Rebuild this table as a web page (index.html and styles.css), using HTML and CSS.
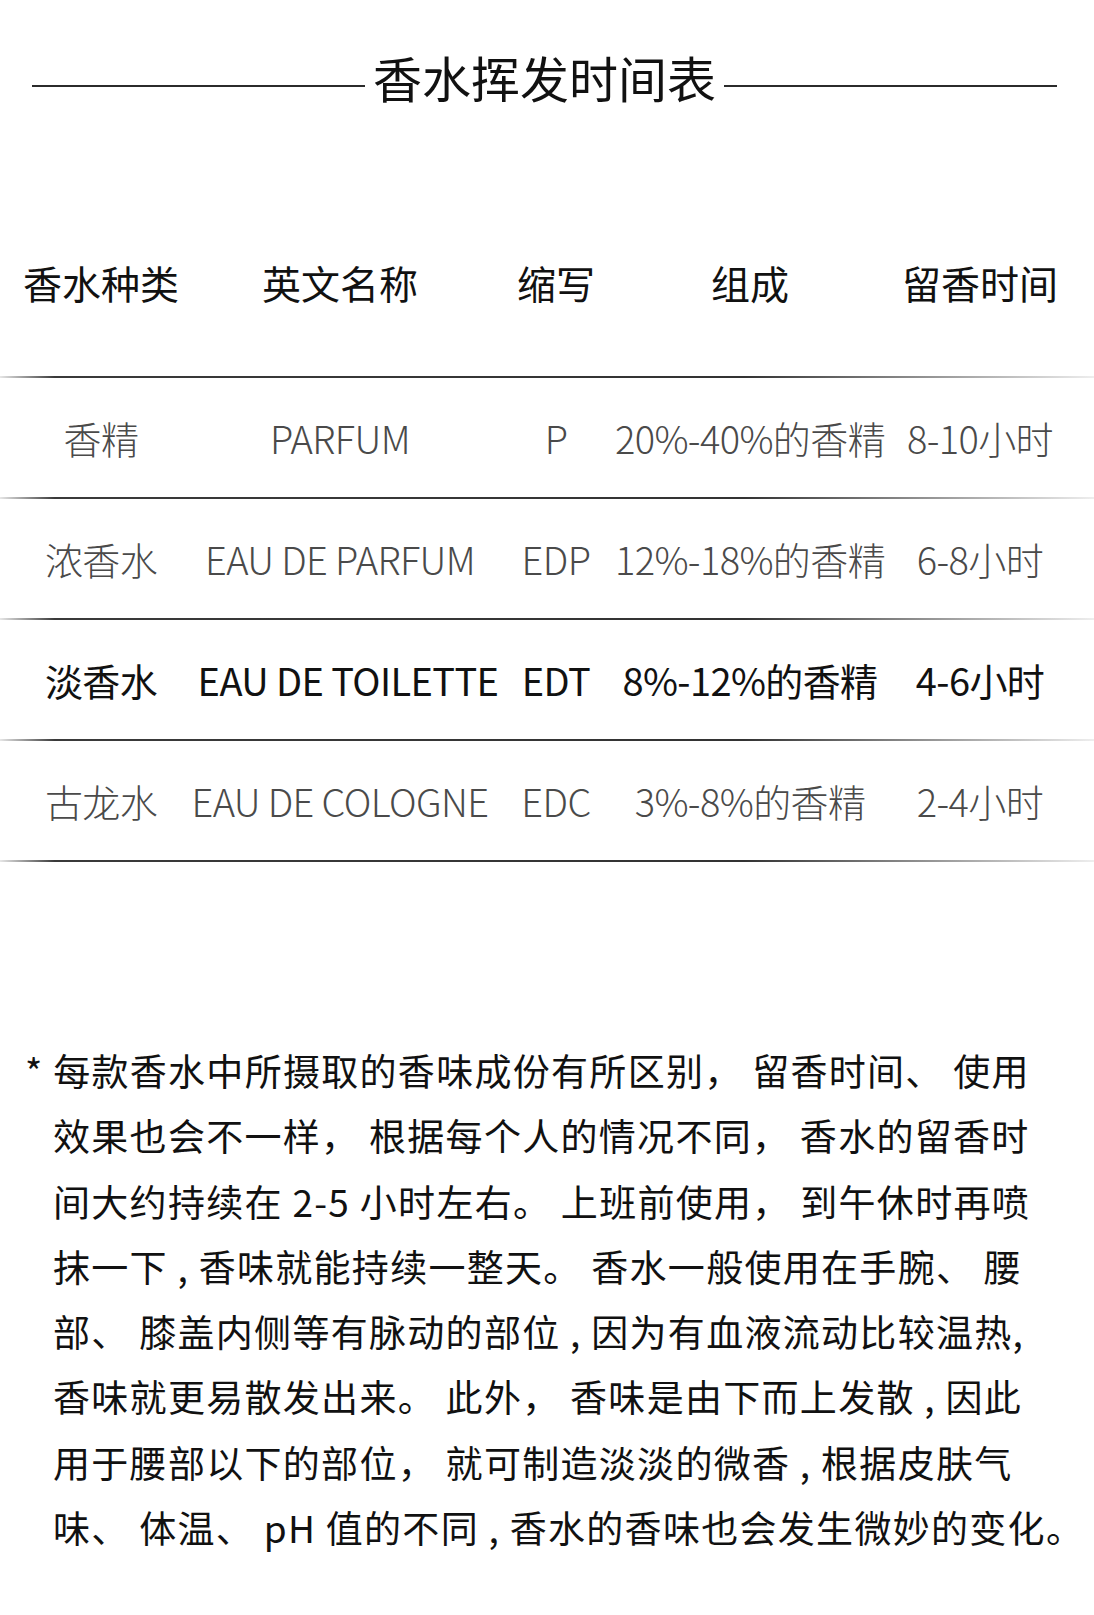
FILE: index.html
```html
<!DOCTYPE html>
<html lang="zh-CN">
<head>
<meta charset="utf-8">
<title>香水挥发时间表</title>
<link rel="stylesheet" href="styles.css">
</head>
<body>
<div class="page">
  <div class="title">
    <span class="rule"></span>
    <h1 class="title-text">香水挥发时间表</h1>
    <span class="rule"></span>
  </div>

  <div class="table">
    <div class="grid thead">
      <div class="cell">香水种类</div>
      <div class="cell">英文名称</div>
      <div class="cell">缩写</div>
      <div class="cell">组成</div>
      <div class="cell">留香时间</div>
    </div>
    <div class="divider"></div>
    <div class="grid row light">
      <div class="cell">香精</div>
      <div class="cell">PARFUM</div>
      <div class="cell">P</div>
      <div class="cell">20%-40%的香精</div>
      <div class="cell">8-10小时</div>
    </div>
    <div class="divider"></div>
    <div class="grid row light">
      <div class="cell">浓香水</div>
      <div class="cell">EAU DE PARFUM</div>
      <div class="cell">EDP</div>
      <div class="cell">12%-18%的香精</div>
      <div class="cell">6-8小时</div>
    </div>
    <div class="divider"></div>
    <div class="grid row strong">
      <div class="cell">淡香水</div>
      <div class="cell shift">EAU DE TOILETTE</div>
      <div class="cell">EDT</div>
      <div class="cell">8%-12%的香精</div>
      <div class="cell">4-6小时</div>
    </div>
    <div class="divider"></div>
    <div class="grid row light">
      <div class="cell">古龙水</div>
      <div class="cell">EAU DE COLOGNE</div>
      <div class="cell">EDC</div>
      <div class="cell">3%-8%的香精</div>
      <div class="cell">2-4小时</div>
    </div>
    <div class="divider"></div>
  </div>

  <p class="note">* 每款香水中所摄取的香味成份有所区别， 留香时间、 使用<br>效果也会不一样， 根据每个人的情况不同， 香水的留香时<br>间大约持续在 2-5 小时左右。 上班前使用， 到午休时再喷<br>抹一下 , 香味就能持续一整天。 香水一般使用在手腕、 腰<br>部、 膝盖内侧等有脉动的部位 , 因为有血液流动比较温热,<br>香味就更易散发出来。 此外， 香味是由下而上发散 , 因此<br>用于腰部以下的部位， 就可制造淡淡的微香 , 根据皮肤气<br>味、 体温、 pH 值的不同 , 香水的香味也会发生微妙的变化。</p>
</div>
</body>
</html>
```

FILE: styles.css
```css
html, body {
  margin: 0;
  padding: 0;
  background: #ffffff;
}

body {
  font-family: "Noto Sans CJK SC", "Noto Sans", sans-serif;
  color: #111111;
}

.page {
  width: 1094px;
  min-height: 1615px;
  overflow: hidden;
}

/* ---------- title ---------- */
.title {
  display: flex;
  align-items: center;
  gap: 8px;
  padding: 42px 37px 0 32px;
  height: 70px;
}

.rule {
  flex: 1;
  height: 2px;
  margin-top: 18px;
  background: #2b2b2b;
}

.title-text {
  margin: 0;
  font-size: 49px;
  font-weight: 400;
  line-height: 70px;
  white-space: nowrap;
  color: #111111;
}

/* ---------- table ---------- */
.table {
  display: flex;
  flex-direction: column;
}

.grid {
  display: grid;
  grid-template-columns: 202px 276px 156px 232px 228px;
}

.cell {
  display: flex;
  justify-content: center;
  align-items: center;
  white-space: nowrap;
}

.thead {
  margin-top: 140px;
  margin-bottom: 64px;
  height: 60px;
  font-size: 39px;
  font-weight: 400;
  color: #111111;
}

.row {
  height: 119px;
  font-size: 38px;
  letter-spacing: -0.6px;
}

.light {
  font-weight: 300;
  color: #4a4a4a;
}

.strong {
  font-weight: 400;
  color: #111111;
}

.shift {
  padding-left: 16px;
}

.divider {
  height: 2px;
  background: linear-gradient(to right, #e6e6e6 0%, #3a3a3a 5%, #333333 68%, #bdbdbd 92%, #eeeeee 100%);
}

/* ---------- note ---------- */
.note {
  margin: 176px 0 0 0;
  padding-left: 53px;
  text-indent: -28px;
  font-size: 37px;
  letter-spacing: 1.3px;
  line-height: 65.3px;
  white-space: nowrap;
  color: #111111;
}
```
